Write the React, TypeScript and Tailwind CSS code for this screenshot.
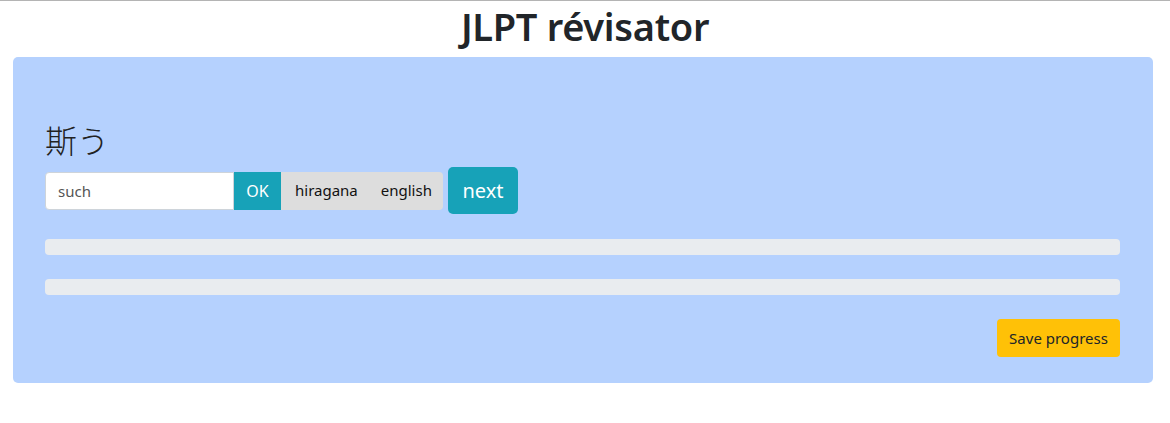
import React from 'react';

const font = { fontFamily: '"Noto Sans", "Open Sans", Arial, sans-serif' };

export default function App() {
  return (
    <div className="min-h-[423px] bg-white border-t border-[#b4b4b4] text-[#212529]" style={font}>
      <h1 className="text-center text-[38px] font-semibold leading-[48px] tracking-[-0.3px] mb-2 pt-[1px] h-[48px]">JLPT révisator</h1>

      <div className="ml-[13px] w-[1140px] rounded-[5px] bg-[#b5d1fe] pl-8 pr-[33px] pt-[63px] pb-[26px]">
        <h2
          className="text-[32px] font-light leading-[39px] mb-2 text-[#222]"
          style={{ fontFamily: '"Noto Sans CJK JP", "Noto Sans", sans-serif' }}
        >
          斯う
        </h2>

        <div className="flex items-center">
          <input
            placeholder="such"
            className="w-[189px] h-[38px] bg-white rounded-l-[4px] border border-[#ced4da] px-3 text-[15px] text-[#495057] placeholder:text-[#555] outline-none"
          />
          <button className="h-[38px] w-[47px] bg-[#17a2b8] text-white text-[16px]">OK</button>
          <div className="flex h-[38px] items-center bg-[#dddddd] rounded-r-[4px] text-[15px] text-[#111]">
            <span className="pl-[14px] pr-[11px]">hiragana</span>
            <span className="pl-[12px] pr-[11px]">english</span>
          </div>
          <button className="ml-[5px] h-[47px] w-[70px] rounded-[5px] bg-[#17a2b8] text-white text-[20px]">next</button>
        </div>

        <div className="mt-[25px] h-4 rounded-[4px] bg-[#e9ecef]" />
        <div className="mt-6 h-4 rounded-[4px] bg-[#e9ecef]" />

        <div className="mt-6 flex justify-end">
          <button className="h-[38px] w-[123px] rounded-[4px] bg-[#ffc107] text-[15px] text-[#212529]">Save progress</button>
        </div>
      </div>
    </div>
  );
}
